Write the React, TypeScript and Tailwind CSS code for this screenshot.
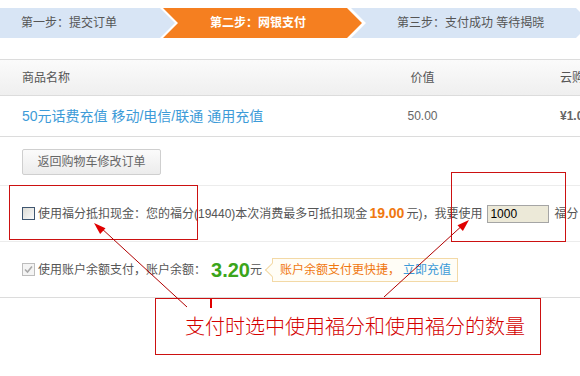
import React from 'react';

const Step = ({ children, className }: { children: React.ReactNode; className: string }) => (
  <div className={`h-[30px] shrink-0 flex items-center text-[12px] ${className}`}>{children}</div>
);

const App: React.FC = () => {
  return (
    <div className="relative w-[580px] h-[376px] overflow-hidden bg-white text-[#555] font-['Liberation_Sans','Noto_Sans_CJK_SC',sans-serif]">
      {/* Step bar */}
      <div className="mt-[8px] flex w-[640px]">
        <Step className="w-[175px] pl-[21px] bg-[#d8e5f5] [clip-path:polygon(0_0,160px_0,175px_50%,160px_100%,0_100%)]">
          第一步：提交订单
        </Step>
        <Step className="ml-[-12px] w-[199px] pl-[47px] bg-[#f57f20] text-white font-bold [clip-path:polygon(0_0,184px_0,199px_50%,184px_100%,0_100%,15px_50%)]">
          第二步：网银支付
        </Step>
        <Step className="ml-[-11px] w-[240px] pl-[46px] bg-[#d8e5f5] [clip-path:polygon(0_0,225px_0,240px_50%,225px_100%,0_100%,15px_50%)]">
          第三步：支付成功 等待揭晓
        </Step>
      </div>

      {/* Order table */}
      <div className="mt-[21px] w-[640px]">
        <div className="h-[37px] flex items-center border-t border-b border-[#dcdcdc] bg-gradient-to-b from-[#fbfbfb] to-[#efefef] text-[12px] text-[#555]">
          <div className="w-[350px] pl-[22px]">商品名称</div>
          <div className="w-[145px] text-center">价值</div>
          <div className="pl-[65px]">云购人次</div>
        </div>
        <div className="h-[41px] flex items-center border-b border-[#dcdcdc]">
          <div className="w-[350px] pl-[22px] text-[14px] text-[#3d9bd8]">50元话费充值 移动/电信/联通 通用充值</div>
          <div className="w-[145px] text-center text-[12px] text-[#666]">50.00</div>
          <div className="pl-[65px] text-[12px] font-bold text-[#666]">¥1.00</div>
        </div>
      </div>

      {/* Back button */}
      <div className="pt-[12px] pb-[10px] pl-[22px] border-b border-[#ececec]">
        <button className="h-[26px] w-[139px] border border-[#cfcfcf] rounded-[2px] bg-gradient-to-b from-[#fbfbfb] to-[#ececec] text-[12px] text-[#666]">
          返回购物车修改订单
        </button>
      </div>

      {/* Points deduction */}
      <div className="h-[56px] flex items-center pl-[22px] border-b border-[#ececec] text-[12px] text-[#555] whitespace-nowrap">
        <span className="w-[13px] h-[13px] mr-[3px] border border-[#3f5670] bg-gradient-to-br from-[#dcdcd6] to-[#fafafa]" />
        <span>使用福分抵扣现金：您的福分(19440)本次消费最多可抵扣现金 </span>
        <span className="mx-[2px] text-[14px] font-bold text-[#f07810]">19.00</span>
        <span>元)，我要使用</span>
        <input
          readOnly
          value="1000"
          className="ml-[5px] w-[62px] h-[18px] px-[2px] border border-[#a5a5a5] bg-[#ece9d8] text-[12px] text-black outline-none"
        />
        <span className="ml-[5px]">福分</span>
      </div>

      {/* Balance */}
      <div className="h-[56px] flex items-center pl-[22px] border-b border-[#dcdcdc] text-[12px] text-[#555] whitespace-nowrap">
        <span className="w-[13px] h-[13px] mr-[3px] border border-[#bdbdbd] bg-[#f4f4f4] flex items-center justify-center">
          <svg width="11" height="11" viewBox="0 0 11 11">
            <path d="M2 5.5 L4.5 8 L9 2.5" fill="none" stroke="#a8a8a8" strokeWidth="1.6" />
          </svg>
        </span>
        <span>使用账户余额支付，账户余额：</span>
        <span className="ml-[5px] text-[20px] font-bold text-[#3ba51b] leading-none">3.20</span>
        <span>元</span>
        <div className="relative ml-[10px] h-[24px] flex items-center pl-[7px] pr-[6px] border border-[#f3d9a6] bg-[#fffdf6]">
          <span className="absolute left-[-6px] top-[6px] w-[10px] h-[10px] rotate-45 border-l border-b border-[#f3d9a6] bg-[#fffdf6]" />
          <span className="text-[#f07810]">账户余额支付更快捷，</span>
          <span className="ml-[3px] text-[#3d9bd8]">立即充值</span>
        </div>
      </div>

      {/* Annotation overlay */}
      <div className="absolute left-[9px] top-[185px] w-[189px] h-[55px] border border-[#cc1111]" />
      <div className="absolute left-[451px] top-[172px] w-[115px] h-[70px] border border-[#cc1111]" />
      <div className="absolute left-[155px] top-[298px] w-[386px] h-[57px] border border-[#cc1111] bg-white flex items-center pl-[29px] text-[20px] font-light text-[#d40000]">
        支付时选中使用福分和使用福分的数量
      </div>
      <svg className="absolute left-0 top-0 pointer-events-none" width="580" height="376">
        <line x1="187" y1="307" x2="100" y2="227" stroke="#b00000" strokeWidth="1" />
        <polygon points="94,223 105.5,228.2 100.1,234" fill="#e00000" />
        <line x1="384" y1="297" x2="465" y2="223" stroke="#b00000" strokeWidth="1" />
        <polygon points="469,220 462.9,231.1 457.5,225.3" fill="#e00000" />
        <line x1="211" y1="299" x2="211" y2="308" stroke="#e00000" strokeWidth="2" />
      </svg>
    </div>
  );
};

export default App;
